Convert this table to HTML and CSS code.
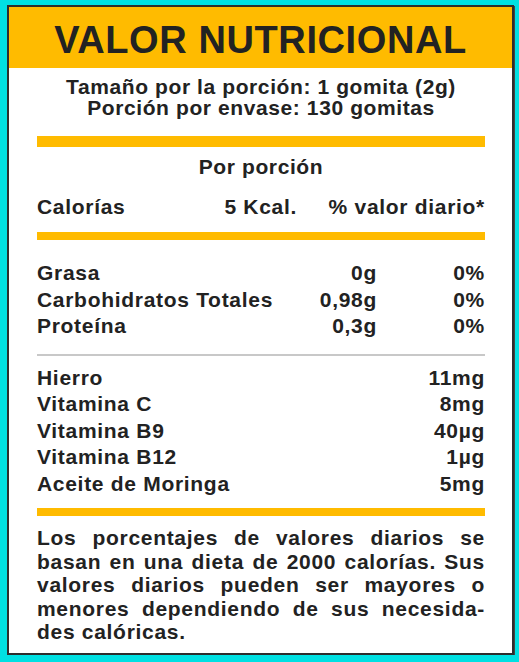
FILE: index.html
```html
<!DOCTYPE html>
<html lang="es">
<head>
    <meta charset="utf-8">
    <title>Valor nutricional</title>
<link rel="stylesheet" href="styles.css">
</head>
<body>
<div class="etiqueta">
    <h1 class="titulo">VALOR NUTRICIONAL</h1>
    <div class="cuerpo">
        <p class="porcion">Tamaño por la porción: 1 gomita (2g)<br>Porción por envase: 130 gomitas</p>
        <div class="barra gruesa"></div>
        <p class="centro">Por porción</p>
        <div class="fila calorias"><span>Calorías</span><span class="der">5 Kcal.</span><span class="der">% valor diario*</span></div>
        <div class="barra"></div>
        <div class="bloque">
            <div class="fila"><span>Grasa</span><span class="der">0g</span><span class="der">0%</span></div>
            <div class="fila"><span>Carbohidratos Totales</span><span class="der">0,98g</span><span class="der">0%</span></div>
            <div class="fila"><span>Proteína</span><span class="der">0,3g</span><span class="der">0%</span></div>
        </div>
        <div class="linea"></div>
        <div class="bloque vitaminas">
            <div class="fila dos"><span>Hierro</span><span class="der">11mg</span></div>
            <div class="fila dos"><span>Vitamina C</span><span class="der">8mg</span></div>
            <div class="fila dos"><span>Vitamina B9</span><span class="der">40µg</span></div>
            <div class="fila dos"><span>Vitamina B12</span><span class="der">1µg</span></div>
            <div class="fila dos"><span>Aceite de Moringa</span><span class="der">5mg</span></div>
        </div>
        <div class="barra"></div>
        <p class="nota">
            <span class="just">Los porcentajes de valores diarios se</span>
            <span class="just">basan en una dieta de 2000 calorías. Sus</span>
            <span class="just">valores diarios pueden ser mayores o</span>
            <span class="just">menores dependiendo de sus necesida-</span>
            <span>des calóricas.</span>
        </p>
    </div>
</div>
</body>
</html>
```

FILE: styles.css
```css
body {margin: 0; background-color: #00e0e2; font-family: "Liberation Sans", Arial, sans-serif; color: #222;}
.etiqueta {width: 503px; height: 646px; margin: 5px 0 0 7px; background-color: white; border: 2px solid #2d2d2d; box-shadow: 1px 1px 0 #444;}
.titulo {margin: 0; height: 55px; padding-top: 6px; line-height: 55px; background-color: #ffbb00; text-align: center; font-size: 38px; letter-spacing: 0.6px; font-weight: bold;}
.cuerpo {padding: 0 27px 0 28px; font-weight: bold; font-size: 21px; letter-spacing: 0.7px;}
p {margin: 0;}
.porcion {margin-top: 8px; text-align: center; line-height: 21px; letter-spacing: 0.6px;}
.barra {height: 8px; background-color: #ffbb00;}
.barra.gruesa {height: 11px; margin-top: 18px;}
.centro {margin-top: 7px; text-align: center; line-height: 26px; letter-spacing: 0.6px;}
.fila {display: grid; grid-template-columns: 1fr auto 108px; line-height: 26.5px;}
.fila.calorias {grid-template-columns: 1fr auto 188px; line-height: 26px; margin-top: 14px; margin-bottom: 12px;}
.fila.dos {grid-template-columns: 1fr auto;}
.der {text-align: right;}
.bloque {margin-top: 20px;}
.linea {height: 2px; background-color: #c8c8c8; margin-top: 14px;}
.vitaminas {margin-top: 9px; margin-bottom: 11px;}
.nota {margin-top: 10px; line-height: 23.5px;}
.nota span {display: block;}
.nota .just {text-align: justify; text-align-last: justify;}
```
